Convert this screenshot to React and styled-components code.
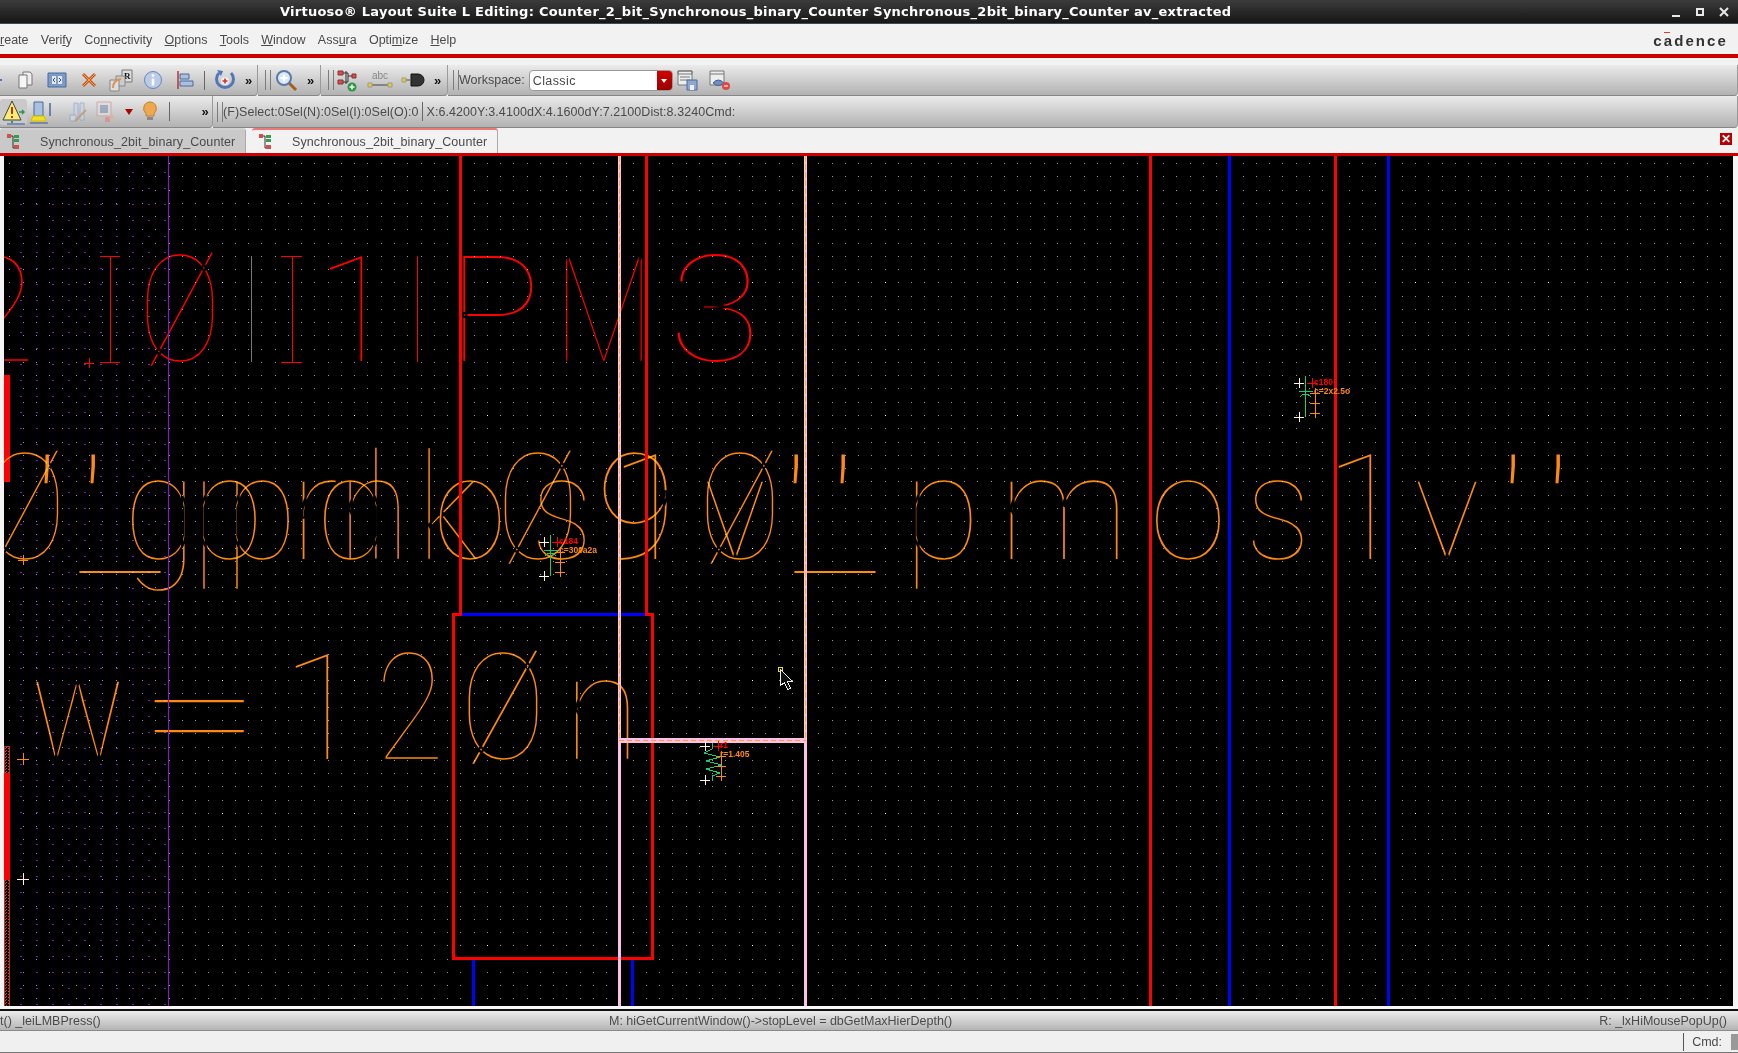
import React from 'react';
import styled, { createGlobalStyle } from 'styled-components';

/****** Styles ******/
const GlobalStyle = createGlobalStyle`
  html, body { margin: 0; padding: 0; height: 100%; background: #f2f2f2; overflow: hidden; }
  #root { height: 100%; }
`;

const Win = styled.div`
  height: 1053px;
  display: flex;
  flex-direction: column;
  overflow: hidden;
  font-family: 'Liberation Sans', Arial, sans-serif;
  font-size: 12.5px;
  color: #4a4a4a;
`;

const TitleBar = styled.div`
  height: 24px;
  flex: none;
  box-sizing: border-box;
  display: flex;
  align-items: center;
  padding-left: 280px;
  background: linear-gradient(#3c3c3c, #161616);
  border-bottom: 1px solid #3d4a58;
  color: #fff;
  font-family: 'DejaVu Sans', sans-serif;
  font-weight: bold;
  font-size: 13px;
  white-space: nowrap;
`;

const TitleText = styled.span`
  width: 949px;
  flex: none;
  letter-spacing: 0.25px;
`;

const WinButtons = styled.div`
  margin-left: auto;
  display: flex;
  gap: 8px;
  padding-right: 6px;
`;

const MenuBar = styled.div`
  height: 30px;
  flex: none;
  display: flex;
  align-items: center;
  background: #f2f2f2;
  padding-top: 2px;
  box-sizing: border-box;
`;

const MenuItem = styled.span`
  margin-right: 12.2px;
  &:first-child { margin-left: -9px; }
`;

const Logo = styled.span`
  position: relative;
  margin-left: auto;
  margin-right: 10px;
  font-size: 15px;
  font-weight: bold;
  font-family: 'Liberation Sans', sans-serif;
  letter-spacing: 2.1px;
  color: #333;
  &::before {
    content: '';
    position: absolute;
    left: 11px;
    top: 0;
    width: 6px;
    height: 1px;
    background: #e33;
  }
`;

const RedRule = styled.div`
  height: ${p => p.$h}px;
  flex: none;
  background: #cc0000;
`;

const Gap = styled.div`
  height: ${p => p.$h}px;
  flex: none;
  background: ${p => p.$bg || '#f2f2f2'};
`;

const ToolRow = styled.div`
  height: ${p => p.$h}px;
  flex: none;
  display: flex;
  background: #f2f2f2;
`;

const ToolGroup = styled.div`
  box-sizing: border-box;
  display: flex;
  align-items: center;
  flex: ${p => (p.$w ? `0 0 ${p.$w}px` : 1)};
  min-width: 0;
  background: linear-gradient(#ebebeb, #b2b2b2);
  border-right: 1px solid #9a9a9a;
  border-bottom: 1px solid #868686;
  border-radius: 0 0 4px 0;
  white-space: nowrap;
`;

const Slot = styled.span`
  flex: 0 0 ${p => p.$w}px;
  box-sizing: border-box;
  height: 26px;
  padding-left: ${p => p.$pl || 0}px;
  display: flex;
  align-items: center;
  justify-content: center;
  border-radius: 3px;
  background: ${p => (p.$on ? '#c9c9c9' : 'transparent')};
  opacity: ${p => p.$dim || 1};
`;

const Handle = styled.span`
  flex: none;
  width: 4px;
  height: 20px;
  margin: 0 ${p => p.$after ?? 3}px 0 ${p => p.$before || 7}px;
  border-left: 1px solid #7c7c7c;
  border-right: 1px solid #7c7c7c;
`;

const Sep = styled.span`
  flex: none;
  width: 1px;
  height: 19px;
  background: #666;
  margin: 0 ${p => p.$r ?? 5}px 0 ${p => p.$l || 3}px;
`;

const More = styled.span`
  flex: 0 0 ${p => p.$w || 16}px;
  font-size: 13px;
  font-weight: bold;
  color: #111;
  text-align: center;
  letter-spacing: -1px;
`;

const Label = styled.span`
  letter-spacing: ${p => p.$ls || 0}px;
  margin-left: ${p => p.$l || 0}px;
`;

const Combo = styled.div`
  flex: none;
  box-sizing: border-box;
  width: 144px;
  height: 21px;
  margin-left: 4px;
  display: flex;
  background: #fff;
  border: 1px solid #999;
  border-radius: 4px;
  overflow: hidden;
`;

const ComboText = styled.span`
  flex: 1;
  padding: 3px 0 0 3px;
  letter-spacing: 0.4px;
`;

const ComboArrow = styled.span`
  flex: 0 0 15px;
  background: linear-gradient(#d40000, #990000);
  position: relative;
  &::after {
    content: '';
    position: absolute;
    left: 4px;
    top: 8px;
    border: 3.5px solid transparent;
    border-top: 4px solid #fff;
    border-bottom: 0;
  }
`;

const TabRow = styled.div`
  height: 25px;
  flex: none;
  display: flex;
  position: relative;
  background: #f2f2f2;
`;

const Tab = styled.div`
  box-sizing: border-box;
  width: 246px;
  margin-right: ${p => p.$mr || 0}px;
  display: flex;
  align-items: center;
  padding-left: 6px;
  gap: 18px;
  background: ${p => (p.$active ? '#f2f2f2' : '#c9c9c9')};
  border-top: 2px solid ${p => (p.$active ? '#e77' : '#d0d0d0')};
  border-right: 1px solid #aaa;
  border-radius: 3px 3px 0 0;
  letter-spacing: 0.09px;
`;

const TabClose = styled.span`
  position: absolute;
  right: 6px;
  top: 5px;
  width: 12px;
  height: 12px;
  background: #b80000;
  color: #fff;
  font-size: 12px;
  line-height: 12px;
  font-weight: bold;
  text-align: center;
`;

const CanvasWrap = styled.div`
  flex: 1;
  min-height: 0;
  display: flex;
  padding: 0 5px 0 4px;
  background: #f4f4f4;
`;

const CanvasSvg = styled.svg`
  display: block;
  width: 1729px;
  height: 850px;
  background: #000;
  shape-rendering: crispEdges;
`;

/* vector label glyphs: a thin font, thinned further with a black stroke that screens away */
const Glyph = styled.text`
  font-family: Roboto, 'Liberation Sans', sans-serif;
  font-weight: 100;
  font-size: 150px;
  text-anchor: middle;
  stroke: #000;
  stroke-width: 2.2px;
  vector-effect: non-scaling-stroke;
  mix-blend-mode: screen;
  shape-rendering: auto;
`;

const TinyText = styled.text`
  font-family: 'Liberation Sans', sans-serif;
  font-size: 8.5px;
  font-weight: bold;
`;

const BlackLine = styled.div`
  height: 2px;
  flex: none;
  background: #111;
`;

const StatusBar = styled.div`
  height: 20px;
  flex: none;
  box-sizing: border-box;
  display: grid;
  grid-template-columns: 609px 1fr auto;
  align-items: center;
  padding-right: 11px;
  background: linear-gradient(#ececec, #b4b4b4);
  border-bottom: 1px solid #8a8a8a;
  white-space: nowrap;
  letter-spacing: 0.1px;
`;

const CmdBar = styled.div`
  height: 22px;
  flex: none;
  box-sizing: border-box;
  display: flex;
  justify-content: flex-end;
  align-items: center;
  background: #f0f0f0;
  border-bottom: 1px solid #777;
`;

const CmdCell = styled.span`
  border-left: 1px solid #555;
  padding: 2px 9px 2px 8px;
`;

const CmdGrip = styled.span`
  width: 7px;
  height: 16px;
  background: #999;
`;

/****** Data ******/
const RED = '#ff0000';
const ORANGE = '#ff8a10';
const GREEN = '#10d070';

const dotPath = () => {
  let minor = '';
  let major = '';
  for (let i = -7; i < 127; i++) {
    for (let j = -20; j < 46; j++) {
      const x = Math.round(89 + i * 13.26);
      const y = Math.round(415 + j * 13.26);
      if (i % 10 === 0 && j % 10 === 0) major += `M${x} ${y}h1v1h-1z`;
      else minor += `M${x} ${y}h1v1h-1z`;
    }
  }
  return { minor, major };
};

const purplePath = () => {
  let d = '';
  for (let x = 20; x < 166; x += 16) {
    for (let y = 172; y < 1006; y += 16) d += `M${x} ${y}h2v1h-2z`;
  }
  return d;
};

const DOTS = dotPath();
const PURPLE = purplePath();

const ROW_ONE = [
  ['2', -3, 362, 0.95], ['1', 356, 362, 1], ['Ø', 180, 362, 0.85], ['P', 494, 362, 1.05],
  ['M', 604, 362, 0.78], ['3', 715, 362, 1.15]
];

const ROW_TWO = [
  ['Ø', 25, 560, 0.85], ["'", 47, 566, 1.5], ["'", 93, 566, 1.5], ['_', 120, 570, 1.35],
  ['g', 160, 560, 0.9], ['p', 228, 560, 0.9], ['p', 261, 560, 0.9], ['r', 314, 560, 1],
  ['d', 352, 560, 0.9], ['n', 374, 560, 0.9], ['k', 448, 560, 0.9], ['o', 470, 560, 0.9],
  ['Ø', 538, 560, 0.85], ['s', 562, 560, 0.85], ['9', 636, 560, 1], ['1', 650, 560, 1],
  ['Ø', 740, 560, 0.85], ['v', 735, 560, 0.9], ["'", 796, 566, 1.5], ["'", 843, 566, 1.5],
  ['_', 835, 570, 1.35], ['p', 942, 560, 0.95], ['m', 1064, 560, 0.98], ['o', 1188, 560, 0.95],
  ['s', 1278, 560, 0.9], ['1', 1365, 560, 1], ['v', 1447, 560, 0.95], ["'", 1513, 566, 1.5],
  ["'", 1558, 566, 1.5]
];

const ROW_THREE = [
  ['w', 78, 760, 0.85], ['=', 200, 765, 1.5], ['1', 322, 760, 1], ['2', 410, 760, 0.85],
  ['Ø', 503, 760, 0.88], ['n', 602, 760, 0.95]
];

const RAILS = [
  [168.5, 156, 1006, '#8a14d8', 1.5], [460.5, 156, 615, RED, 3], [646.5, 156, 615, RED, 3],
  [1150.5, 156, 1006, RED, 3], [1229, 156, 1006, '#0000ff', 3], [1335.5, 156, 1006, RED, 3],
  [1388.5, 156, 1006, '#0000ff', 3], [473, 958, 1006, '#0000ff', 3], [632, 958, 1006, '#0000ff', 3]
];

const Plus = ({ x, y, c, s = 5 }) => (
  <path d={`M${x - s} ${y}H${x + s}M${x} ${y - s}V${y + s}`} stroke={c} fill="none" />
);

const Device = ({ x, y, name, value, resistor }) => (
  <g>
    {resistor ? (
      <path d={`M${x + 7} ${y - 3}v6l-8 4 16 4-14 4 16 4-16 4 14 4-8 3v5`} stroke={GREEN} fill="none" />
    ) : (
      <path d={`M${x + 6} ${y - 7}V${y + 34}M${x} ${y + 8}H${x + 14}M${x + 1} ${y + 14}Q${x + 6} ${y + 8} ${x + 12} ${y + 14}`} stroke={GREEN} fill="none" />
    )}
    <Plus x={x} y={y} c="#fff6e0" />
    <Plus x={x} y={y + 34} c="#fff6e0" />
    <Plus x={x + 13} y={y} c={RED} />
    <Plus x={x + 16} y={y + 10} c={ORANGE} />
    <Plus x={x + 16} y={y + 20} c={ORANGE} />
    <Plus x={x + 16} y={y + 30} c={ORANGE} />
    <TinyText x={x + 15} y={y + 2} fill={RED}>{name}</TinyText>
    <TinyText x={x + 15} y={y + 11} fill={ORANGE}>{value}</TinyText>
  </g>
);

/****** Icons ******/
const Ico = ({ children, w = 22, h = 22 }) => (
  <svg width={w} height={h} viewBox={`0 0 ${w} ${h}`}>{children}</svg>
);

const CopyIcon = () => (
  <Ico>
    <path d="M9 3h7l2 2v11H9z" fill="#eee" stroke="#777" />
    <path d="M5 6h8v13H5z" fill="#f5f5f5" stroke="#777" />
  </Ico>
);
const FitIcon = () => (
  <Ico>
    <path d="M2 4l18 0v14l-18 0z" fill="#7d9bc9" stroke="#4a6a9c" />
    <path d="M6 7h10v8H6z" fill="#dfe8f5" />
    <path d="M11 7v8M9 9l-2 2 2 2M13 9l2 2-2 2" stroke="#2f4f80" fill="none" />
  </Ico>
);
const CrossIcon = () => (
  <Ico>
    <path d="M5 5l12 12M17 5L5 17" stroke="#c8581a" strokeWidth="3" />
    <path d="M5 5l12 12M17 5L5 17" stroke="#f0a060" strokeWidth="1" />
  </Ico>
);
const RepeatIcon = () => (
  <Ico w={26} h={24}>
    <path d="M14 2h10v12H14z" fill="#ddd" stroke="#777" />
    <text x="16" y="11" fontSize="9" fontWeight="bold" fontFamily="Liberation Serif" fill="#111">R</text>
    <path d="M8 8h9v10H8z" fill="#ccc" stroke="#888" />
    <path d="M2 12h9v11H2z" fill="#ddd" stroke="#888" />
    <path d="M5 20q0-8 8-9" stroke="#e09050" strokeWidth="2" fill="none" />
  </Ico>
);
const InfoIcon = () => (
  <Ico>
    <circle cx="11" cy="11" r="8.5" fill="#b9cbe8" stroke="#6a86bb" />
    <circle cx="11" cy="6.5" r="1.4" fill="#fff" />
    <path d="M11 9.5v7" stroke="#fff" strokeWidth="2.6" />
  </Ico>
);
const AlignIcon = () => (
  <Ico>
    <path d="M4 2v18" stroke="#c03030" strokeWidth="1.5" />
    <path d="M6 5h9v5H6zM6 12h13v5H6z" fill="#a9c0e0" stroke="#4a6a9c" />
  </Ico>
);
const UndoIcon = () => (
  <Ico w={22} h={24}>
    <path d="M5 5a8.5 8.5 0 1 0 12 0" stroke="#5078b8" strokeWidth="3" fill="none" />
    <path d="M3 2l6 1-2 5z" fill="#5078b8" />
    <circle cx="11" cy="13" r="4" fill="#eee" />
    <path d="M8.5 13h5M11 10.5v5" stroke="#d03030" strokeWidth="1.6" />
  </Ico>
);
const ZoomIcon = () => (
  <Ico w={24} h={24}>
    <path d="M15 15l7 7" stroke="#a06020" strokeWidth="3" />
    <circle cx="10" cy="10" r="7" fill="#dbe8f8" stroke="#5a7aa8" strokeWidth="2" />
    <path d="M6.5 10h7M10 6.5v7" stroke="#fff" strokeWidth="2" />
  </Ico>
);
const WireIcon = () => (
  <Ico w={24} h={24}>
    <path d="M3 3h5v4H3zM3 12h5v4H3zM17 6h4v4h-4z" fill="#d05050" stroke="#903030" />
    <path d="M8 5h5v9H8M11 3v13M13 8h4" stroke="#333" fill="none" />
    <circle cx="17" cy="19" r="4.5" fill="#2a9a40" />
    <path d="M14.5 19h5M17 16.5v5" stroke="#fff" strokeWidth="1.5" />
  </Ico>
);
const AbcIcon = () => (
  <Ico w={26} h={22}>
    <text x="5" y="10" fontSize="10" fontFamily="Liberation Sans" fill="#888">abc</text>
    <path d="M4 16h18" stroke="#444" />
    <path d="M1 14h4v4H1zM21 14h4v4h-4z" fill="#e8d020" stroke="#999" />
  </Ico>
);
const GateIcon = () => (
  <Ico w={24} h={20}>
    <path d="M1 10h8" stroke="#555" />
    <path d="M1 8h4v4H1z" fill="#e8d020" stroke="#999" />
    <path d="M10 4h7a6 6 0 0 1 0 12h-7z" fill="#333" stroke="#111" />
    <path d="M23 10h-1" stroke="#333" />
  </Ico>
);
const SaveIcon = () => (
  <Ico w={22} h={22}>
    <path d="M1 2h14v14H1z" fill="#eee" stroke="#777" />
    <path d="M1 2h14v3H1zM3 8h10M3 11h10" stroke="#777" fill="none" />
    <path d="M10 11h10v10H10z" fill="#8fa7cf" stroke="#4a6a9c" />
    <path d="M13 16h4v5h-4z" fill="#eee" />
  </Ico>
);
const EyeIcon = () => (
  <Ico w={22} h={22}>
    <path d="M1 2h14v14H1z" fill="#eee" stroke="#777" />
    <path d="M1 5h14" stroke="#777" />
    <path d="M4 14q5-6 11 0-6 5-11 0z" fill="#6f8fc0" stroke="#3f5f90" />
    <circle cx="17" cy="17" r="4" fill="#d84a4a" />
    <path d="M15 17h4" stroke="#fff" />
  </Ico>
);
const WarnIcon = () => (
  <Ico w={26} h={26}>
    <path d="M11 2L2 21h18z" fill="#f5ee70" stroke="#444" />
    <path d="M11 8v7M11 17v2" stroke="#c03030" strokeWidth="2" />
    <path d="M18 13h5M21 11l2 2-2 2" stroke="#2a9a50" fill="none" strokeWidth="1.5" />
    <path d="M11 22v2" stroke="#2a9a50" strokeWidth="2" />
    <path d="M6 25h18" stroke="#3050a0" />
  </Ico>
);
const HiliteIcon = () => (
  <Ico w={24} h={26}>
    <path d="M5 3h9v14H5z" fill="#a9c0e0" stroke="#4a6a9c" />
    <path d="M4 17h11l2 5H2z" fill="#f0e020" stroke="#d0c000" />
    <path d="M1 24h18" stroke="#4050a0" />
    <path d="M21 4v13" stroke="#4a6a9c" strokeWidth="1.5" />
  </Ico>
);
const PencilIcon = () => (
  <Ico w={24} h={24}>
    <path d="M7 3h4v17H7zM13 3h4v17h-4z" fill="#c8d4e6" stroke="#90a4c4" />
    <path d="M3 15h6v6H3z" fill="#d0d8e4" stroke="#90a4c4" />
    <path d="M8 21l11-11" stroke="#c09060" strokeWidth="2" />
  </Ico>
);
const BoxIcon = () => (
  <Ico w={24} h={24}>
    <path d="M3 2h14v14H3z" fill="#ddd" stroke="#d09090" />
    <path d="M6 5h8v8H6z" fill="#8a9ab8" />
    <path d="M11 22h5v-5h-5z" fill="#d88" />
    <path d="M18 14l3 5h-6z" fill="#e0b090" />
  </Ico>
);
const BulbIcon = () => (
  <Ico w={20} h={24}>
    <path d="M10 2a6.5 6.5 0 0 0-4 11.500V16h8v-2.500A6.500 6.500 0 0 0 10 2z" fill="#f0a850" stroke="#c08030" />
    <path d="M7 17h6v3H7z" fill="#888" />
  </Ico>
);
const CellIcon = () => (
  <Ico w={16} h={18}>
    <path d="M2 3h5v12h5" stroke="#333" fill="none" />
    <path d="M1 1h4v4H1zM8 12h5v4H8z" fill="#d05050" />
    <path d="M8 2h5v3H8zM8 6h5v3H8z" fill="#3a9a50" />
  </Ico>
);
const WinGlyph = ({ d, sw = 2 }) => (
  <svg width="16" height="12" viewBox="0 0 16 12">
    <path d={d} stroke="#e8e8e8" strokeWidth={sw} fill="none" />
  </svg>
);

/****** Component ******/
const Layout = () => (
  <CanvasSvg viewBox="4 156 1729 850">
    <defs>
      <pattern id="hatch" width="3" height="3" patternUnits="userSpaceOnUse">
        <rect width="3" height="3" fill="#000" />
        <rect width="1" height="1" fill="#e04020" />
        <rect x="2" y="1" width="1" height="1" fill="#e04020" />
      </pattern>
    </defs>
    <path d={DOTS.minor} fill="#9a9ab4" />
    <path d={DOTS.major} fill="#fff" />
    <path d={PURPLE} fill="#8a14e8" />

    <rect x="4" y="375" width="6" height="107" fill={RED} />
    <rect x="4.500" y="746.500" width="5" height="260" fill="url(#hatch)" stroke="#c03020" />
    <rect x="4" y="773" width="6" height="107" fill={RED} />

    {ROW_ONE.map(([ch, x, y, sx], i) => (
      <Glyph key={`a${i}`} fill={RED} transform={`translate(${x} ${y}) scale(${sx} 1)`}>{ch}</Glyph>
    ))}
    {ROW_TWO.map(([ch, x, y, sx], i) => (
      <Glyph key={`b${i}`} fill={ORANGE} transform={`translate(${x} ${y}) scale(${sx} 1)`}>{ch}</Glyph>
    ))}
    {ROW_THREE.map(([ch, x, y, sx], i) => (
      <Glyph key={`c${i}`} fill={ORANGE} transform={`translate(${x} ${y}) scale(${sx} 1)`}>{ch}</Glyph>
    ))}

    {/* serif bars and stems of the red label */}
    <path d="M110 256V362M100 256.500H120M100 362.500H120M292 256V362M281 256.500H302M281 362.500H302M417 256V362" stroke={RED} fill="none" />
    <path d="M251 256V362" stroke="#777" fill="none" />

    {RAILS.map(([x, y1, y2, c, w]) => (
      <line key={`${x}-${y1}`} x1={x} x2={x} y1={y1} y2={y2} stroke={c} strokeWidth={w} />
    ))}

    <rect x="453" y="614" width="199" height="344" fill="none" stroke={RED} strokeWidth="3" />
    <line x1="462" x2="645" y1="614" y2="614" stroke="#0000ff" strokeWidth="3" />

    <line x1="619.500" x2="619.500" y1="156" y2="1006" stroke="#ffc0e8" strokeWidth="3" />
    <line x1="619.500" x2="619.500" y1="156" y2="740" stroke="#ffb020" strokeDasharray="6 2" />
    <line x1="805.500" x2="805.500" y1="156" y2="1006" stroke="#ffc0e8" strokeWidth="3" />
    <line x1="805.500" x2="805.500" y1="156" y2="740" stroke="#ffb020" strokeDasharray="6 2" />
    <rect x="619" y="738" width="187" height="5" fill="#ffc0e8" />
    <line x1="619" x2="806" y1="740.500" y2="740.500" stroke="#ffa020" strokeDasharray="5 3" />

    <Plus x={89} y={363} c={RED} />
    <Plus x={23} y={560} c={ORANGE} />
    <Plus x={23} y={759} c={ORANGE} s={6} />
    <Plus x={23} y={879} c="#fff6e0" s={6} />

    <Device x={544} y={542} name="c184" value="c=300a2a" />
    <Device x={1299} y={383} name="c180" value="c=2x2.5o" />
    <Device x={705} y={746} name="r1" value="r=1.405" resistor />

    <rect x="778.500" y="667.500" width="4" height="4" fill="none" stroke="#f0e020" />
    <path d="M780.500 669.500v16l4-3 3 7 3-1-3-7h5z" fill="#111" stroke="#eee" />
  </CanvasSvg>
);

const App = () => (
  <Win>
    <GlobalStyle />
    <TitleBar>
      <TitleText>Virtuoso® Layout Suite L Editing: Counter_2_bit_Synchronous_binary_Counter Synchronous_2bit_binary_Counter av_extracted</TitleText>
      <WinButtons>
        <WinGlyph d="M4 10h8" />
        <WinGlyph d="M5 3h6v6H5z" />
        <WinGlyph d="M4 2l8 8M12 2l-8 8" />
      </WinButtons>
    </TitleBar>
    <MenuBar>
      <MenuItem>C<u>r</u>eate</MenuItem>
      <MenuItem>Veri<u>f</u>y</MenuItem>
      <MenuItem>Co<u>n</u>nectivity</MenuItem>
      <MenuItem><u>O</u>ptions</MenuItem>
      <MenuItem><u>T</u>ools</MenuItem>
      <MenuItem><u>W</u>indow</MenuItem>
      <MenuItem>Ass<u>u</u>ra</MenuItem>
      <MenuItem>Opti<u>m</u>ize</MenuItem>
      <MenuItem><u>H</u>elp</MenuItem>
      <Logo>cadence</Logo>
    </MenuBar>
    <RedRule $h={4} />
    <Gap $h={7} />
    <ToolRow $h={31}>
      <ToolGroup $w={258}>
        <Slot $w={9}><svg width="9" height="8"><path d="M0 3h2v2H0z" fill="#5078b8" /></svg></Slot>
        <Slot $w={32}><CopyIcon /></Slot>
        <Slot $w={32}><FitIcon /></Slot>
        <Slot $w={32}><CrossIcon /></Slot>
        <Slot $w={32}><RepeatIcon /></Slot>
        <Slot $w={32}><InfoIcon /></Slot>
        <Slot $w={32}><AlignIcon /></Slot>
        <Sep $r={6} />
        <Slot $w={27}><UndoIcon /></Slot>
        <More $w={20}>»</More>
      </ToolGroup>
      <ToolGroup $w={63}>
        <Handle />
        <Slot $w={24}><ZoomIcon /></Slot>
        <More $w={24}>»</More>
      </ToolGroup>
      <ToolGroup $w={127}>
        <Handle $after={1} />
        <Slot $w={24}><WireIcon /></Slot>
        <Slot $w={42}><AbcIcon /></Slot>
        <Slot $w={24}><GateIcon /></Slot>
        <More $w={24}>»</More>
      </ToolGroup>
      <ToolGroup>
        <Handle $before={5} $after={0} />
        <Label>Workspace:</Label>
        <Combo>
          <ComboText>Classic</ComboText>
          <ComboArrow />
        </Combo>
        <Slot $w={31}><SaveIcon /></Slot>
        <Slot $w={32}><EyeIcon /></Slot>
      </ToolGroup>
    </ToolRow>
    <ToolRow $h={32}>
      <ToolGroup $w={213}>
        <Slot $w={27} $on><WarnIcon /></Slot>
        <Slot $w={28}><HiliteIcon /></Slot>
        <Slot $w={38} $pl={10} $dim={0.7}><PencilIcon /></Slot>
        <Slot $w={26} $dim={0.7}><BoxIcon /></Slot>
        <Slot $w={20}><svg width="8" height="6"><path d="M0 0h8L4 6z" fill="#b00000" /></svg></Slot>
        <Slot $w={22}><BulbIcon /></Slot>
        <Sep $l={8} $r={0} />
        <Slot $w={27} />
        <More $w={15}>»</More>
      </ToolGroup>
      <ToolGroup>
        <Handle $before={4} $after={0} />
        <Label $ls={0.05}>(F)Select:0Sel(N):0Sel(I):0Sel(O):0</Label>
        <Sep $l={3} $r={4} />
        <Label $ls={0.06}>X:6.4200Y:3.4100dX:4.1600dY:7.2100Dist:8.3240Cmd:</Label>
      </ToolGroup>
    </ToolRow>
    <TabRow>
      <Tab $mr={6}><CellIcon />Synchronous_2bit_binary_Counter</Tab>
      <Tab $active><CellIcon />Synchronous_2bit_binary_Counter</Tab>
      <TabClose>✕</TabClose>
    </TabRow>
    <RedRule $h={3} />
    <CanvasWrap><Layout /></CanvasWrap>
    <Gap $h={3} $bg="#f8f8f8" />
    <BlackLine />
    <StatusBar>
      <Label $l={-25}>Point() _leiLMBPress()</Label>
      <Label>M: hiGetCurrentWindow()-&gt;stopLevel = dbGetMaxHierDepth()</Label>
      <Label>R: _lxHiMousePopUp()</Label>
    </StatusBar>
    <CmdBar>
      <CmdCell>Cmd:</CmdCell>
      <CmdGrip />
    </CmdBar>
  </Win>
);

export default App;
